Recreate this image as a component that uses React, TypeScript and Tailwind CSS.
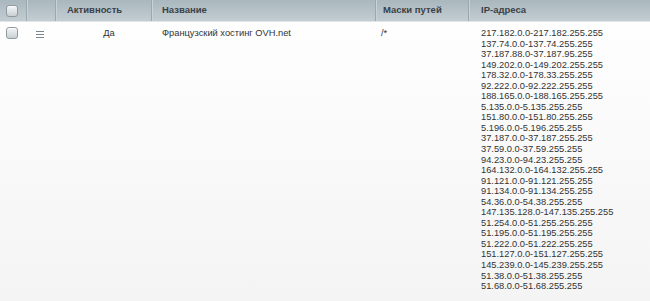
import React from "react";

const ips = [
  "217.182.0.0-217.182.255.255",
  "137.74.0.0-137.74.255.255",
  "37.187.88.0-37.187.95.255",
  "149.202.0.0-149.202.255.255",
  "178.32.0.0-178.33.255.255",
  "92.222.0.0-92.222.255.255",
  "188.165.0.0-188.165.255.255",
  "5.135.0.0-5.135.255.255",
  "151.80.0.0-151.80.255.255",
  "5.196.0.0-5.196.255.255",
  "37.187.0.0-37.187.255.255",
  "37.59.0.0-37.59.255.255",
  "94.23.0.0-94.23.255.255",
  "164.132.0.0-164.132.255.255",
  "91.121.0.0-91.121.255.255",
  "91.134.0.0-91.134.255.255",
  "54.36.0.0-54.38.255.255",
  "147.135.128.0-147.135.255.255",
  "51.254.0.0-51.255.255.255",
  "51.195.0.0-51.195.255.255",
  "51.222.0.0-51.222.255.255",
  "151.127.0.0-151.127.255.255",
  "145.239.0.0-145.239.255.255",
  "51.38.0.0-51.38.255.255",
  "51.68.0.0-51.68.255.255",
];

function Check() {
  return (
    <div className="w-[12px] h-[12px] rounded-[3px] border border-[#8e9aa0] bg-gradient-to-b from-[#f4f6f7] to-[#c9d0d4] shadow-[inset_0_1px_0_#fff]" />
  );
}

function HCell({ w, children, first }: { w: string; children?: React.ReactNode; first?: boolean }) {
  return (
    <div
      className={`${w} h-full flex items-center shrink-0 ${first ? "" : "border-l border-l-[#9aa9b0] shadow-[inset_1px_0_0_#c8d2d6]"}`}
    >
      {children}
    </div>
  );
}

export default function App() {
  return (
    <div
      className="w-[650px] h-[301px] overflow-hidden bg-gradient-to-b from-white to-[#f4f4f4] text-[#333]"
      style={{ fontFamily: '"Liberation Sans", Arial, sans-serif' }}
    >
      <div className="h-[22px] flex bg-gradient-to-b from-[#a9b7be] to-[#c3cdd2] border-b border-b-[#dfe5e8] text-[9.5px] font-bold text-[#3a4247]">
        <HCell w="w-[26px]" first>
          <div className="pl-[6px]"><Check /></div>
        </HCell>
        <HCell w="w-[29px]" />
        <HCell w="w-[96px]"><span className="pl-[11px]">Активность</span></HCell>
        <HCell w="w-[224px]"><span className="pl-[10px]">Название</span></HCell>
        <HCell w="w-[93px]"><span className="pl-[7px]">Маски путей</span></HCell>
        <HCell w="w-[182px]"><span className="pl-[12px]">IP-адреса</span></HCell>
      </div>
      <div className="flex text-[9.3px] leading-[10.55px]">
        <div className="w-[26px] shrink-0 pt-[5px] pl-[6px]"><Check /></div>
        <div className="w-[29px] shrink-0 pt-[9px] pl-[10px]">
          <div className="flex flex-col gap-[2px] w-[8px]">
            <div className="h-px bg-[#7a868c]" />
            <div className="h-px bg-[#7a868c]" />
            <div className="h-px bg-[#7a868c]" />
          </div>
        </div>
        <div className="w-[96px] shrink-0 pt-[6px] text-center pl-[12px]">Да</div>
        <div className="w-[224px] shrink-0 pt-[6px] pl-[11px]">Французский хостинг OVH.net</div>
        <div className="w-[93px] shrink-0 pt-[6px] pl-[6px]">/*</div>
        <div className="w-[182px] shrink-0 pt-[6px] pl-[13px]">
          {ips.map((ip) => (
            <div key={ip}>{ip}</div>
          ))}
        </div>
      </div>
    </div>
  );
}
